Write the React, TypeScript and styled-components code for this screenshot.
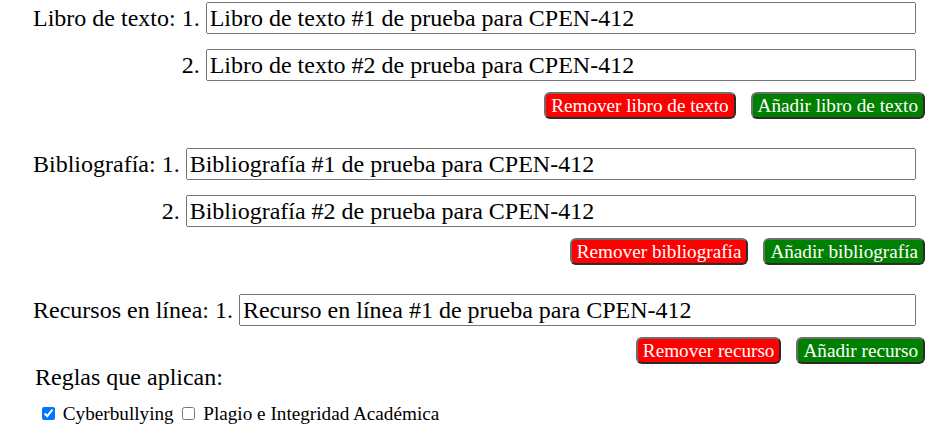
import React from 'react';
import styled, { createGlobalStyle } from 'styled-components';

const Global = createGlobalStyle`
  html, body { margin: 0; padding: 0; background: #ffffff; }
  body { font-family: "Liberation Serif", "Times New Roman", serif; color: #000000; }
`;

const Page = styled.div`
  padding: 2px 20px 0 33px;
  font-size: 24px;
  font-family: "Liberation Serif", "Times New Roman", serif;
`;

const Section = styled.section<{ $gapTop: number }>`
  margin-top: ${(p) => p.$gapTop}px;
`;

const Grid = styled.div`
  display: grid;
  grid-template-columns: auto auto 1fr;
  column-gap: 6px;
  row-gap: 15px;
  align-items: center;
  margin-right: 9px;
`;

const Title = styled.span`
  grid-column: 1;
  white-space: nowrap;
`;

const Num = styled.span`
  grid-column: 2;
  justify-self: end;
`;

const Field = styled.input`
  grid-column: 3;
  min-width: 0;
  height: 32px;
  box-sizing: border-box;
  font-family: "Liberation Serif", "Times New Roman", serif;
  font-size: 24px;
  padding: 1px 2px;
  color: #000000;
`;

const Actions = styled.div`
  display: flex;
  justify-content: flex-end;
  gap: 15px;
  margin-top: 11px;
`;

const ActionButton = styled.button<{ $variant: 'remove' | 'add' }>`
  height: 27px;
  box-sizing: border-box;
  padding: 0 5px;
  font-family: "Liberation Serif", "Times New Roman", serif;
  font-size: 19.2px;
  color: #ffffff;
  background: ${(p) => (p.$variant === 'remove' ? '#ff0000' : '#008000')};
  border: 2px solid;
  border-color: #6e6e6e #2b2b2b #2b2b2b #6e6e6e;
  border-radius: 6px;
  cursor: pointer;
  white-space: nowrap;
`;

const RulesTitle = styled.div`
  padding-left: 2px;
  font-size: 24px;
`;

const Checks = styled.div`
  margin-top: 12px;
  padding-left: 5px;
  font-size: 19.2px;
`;

const CheckLabel = styled.label`
  cursor: pointer;
`;

const Check = styled.input`
  margin: 3px 3px 3px 4px;
`;

type Block = {
  title: string;
  values: string[];
  remove: string;
  add: string;
  gapTop: number;
};

const blocks: Block[] = [
  {
    title: 'Libro de texto:',
    values: ['Libro de texto #1 de prueba para CPEN-412', 'Libro de texto #2 de prueba para CPEN-412'],
    remove: 'Remover libro de texto',
    add: 'Añadir libro de texto',
    gapTop: 0,
  },
  {
    title: 'Bibliografía:',
    values: ['Bibliografía #1 de prueba para CPEN-412', 'Bibliografía #2 de prueba para CPEN-412'],
    remove: 'Remover bibliografía',
    add: 'Añadir bibliografía',
    gapTop: 29,
  },
  {
    title: 'Recursos en línea:',
    values: ['Recurso en línea #1 de prueba para CPEN-412'],
    remove: 'Remover recurso',
    add: 'Añadir recurso',
    gapTop: 29,
  },
];

export default function App() {
  return (
    <>
      <Global />
      <Page>
        {blocks.map((b) => (
          <Section key={b.title} $gapTop={b.gapTop}>
            <Grid>
              {b.values.map((v, i) => (
                <React.Fragment key={i}>
                  {i === 0 && <Title>{b.title}</Title>}
                  <Num>{i + 1}.</Num>
                  <Field type="text" defaultValue={v} />
                </React.Fragment>
              ))}
            </Grid>
            <Actions>
              <ActionButton $variant="remove">{b.remove}</ActionButton>
              <ActionButton $variant="add">{b.add}</ActionButton>
            </Actions>
          </Section>
        ))}
        <RulesTitle>Reglas que aplican:</RulesTitle>
        <Checks>
          <CheckLabel>
            <Check type="checkbox" defaultChecked /> Cyberbullying
          </CheckLabel>{' '}
          <CheckLabel>
            <Check type="checkbox" /> Plagio e Integridad Académica
          </CheckLabel>
        </Checks>
      </Page>
    </>
  );
}
